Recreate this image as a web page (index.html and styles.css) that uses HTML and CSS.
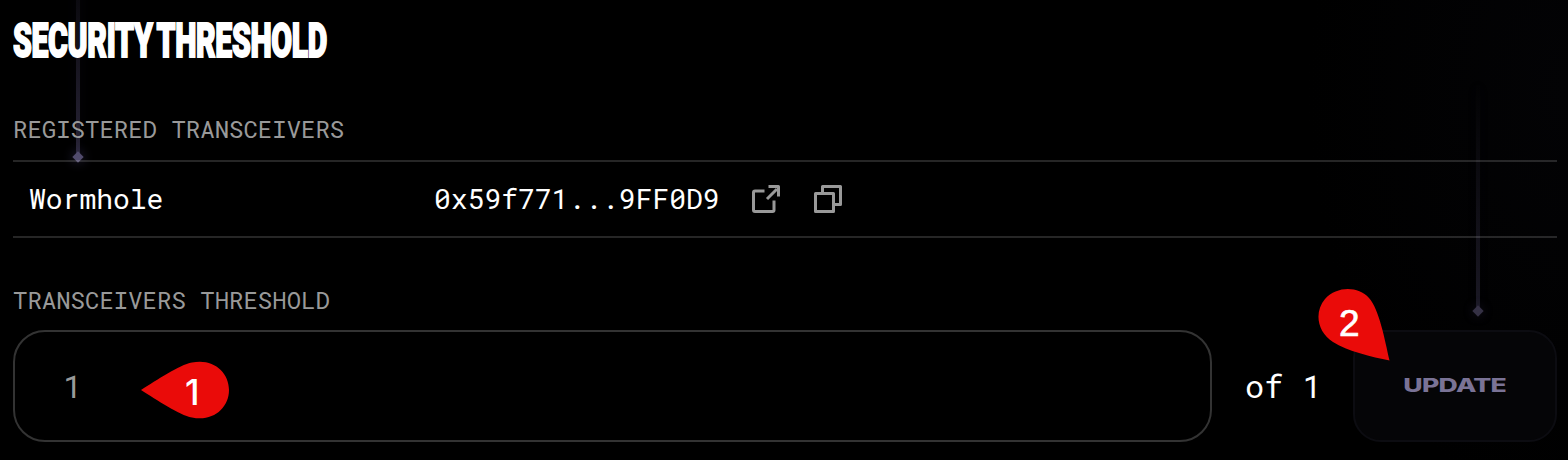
FILE: index.html
```html
<!DOCTYPE html>
<html lang="en">
<head>
<meta charset="utf-8">
<title>Security Threshold</title>
<link rel="stylesheet" href="styles.css">
</head>
<body>
<div class="backdrop">
  <div class="beam beam-left"></div>
  <div class="beam beam-right"></div>
</div>
<main class="panel">
  <h1 class="title"><span class="title-text">SECURITY THRESHOLD</span></h1>
  <h2 class="label label-registered">REGISTERED TRANSCEIVERS</h2>
  <div class="row">
    <span class="name">Wormhole</span>
    <span class="address">0x59f771...9FF0D9</span>
    <svg class="icon icon-open" viewBox="0 0 30 30"><path d="M13.500 7H4Q2.500 7 2.500 8.500V26Q2.500 27.500 4 27.500H21.500Q23 27.500 23 26V16.500"/><path d="M16 15L26 5M17.500 2.500H27.500V12.500"/></svg>
    <svg class="icon" viewBox="0 0 30 30"><path d="M2.500 9.500H20.500V27.500H2.500ZM9.500 9.500V2.500H27.500V20.500H20.500"/></svg>
  </div>
  <h2 class="label label-threshold">TRANSCEIVERS THRESHOLD</h2>
  <div class="form">
    <div class="field"><span class="value">1</span>
      <div class="marker marker-one"><svg class="drop" viewBox="0 0 90 60"><path d="M1 30C17 20 39 5 52 2.500C73 -2 89 12 89 30S73 62 52 57.500C39 55 17 40 1 30Z"/></svg><span class="digit">1</span></div>
    </div>
    <span class="total">of 1</span>
    <div class="button"><span class="button-text">UPDATE</span>
      <div class="marker marker-two"><svg class="drop" viewBox="0 0 72 72"><path d="M71.500 71.500C54 68 29 62 15 53C-1 43 -4 23 7 10C19 -3 40 -3 51 9C61 20 67 51 71.500 71.500Z"/></svg><span class="digit">2</span></div>
    </div>
  </div>
</main>
</body>
</html>
```
FILE: styles.css
```css
* { box-sizing: border-box; }
body {
  margin: 0;
  height: 460px;
  overflow: hidden;
  background: #000;
  color: #fff;
  font-family: "Roboto Mono", "DejaVu Sans Mono", monospace;
}
.backdrop {
  position: absolute;
  inset: 0;
  background: radial-gradient(ellipse 260px 420px at 100% 20%, #030305, transparent);
}
.beam {
  position: absolute;
  width: 4px;
  background: linear-gradient(transparent, #292538);
  box-shadow: 0 0 12px rgba(75, 65, 120, 0.12);
}
.beam::after {
  content: "";
  position: absolute;
  left: -2px;
  bottom: -4px;
  width: 8px;
  height: 8px;
  background: #514b6d;
  transform: rotate(45deg);
  box-shadow: 0 0 12px rgba(90, 80, 140, 0.6);
}
.beam-left { left: 76px; top: -60px; height: 217px; }
.beam-right { left: 1476px; top: 85px; height: 226px; background: linear-gradient(transparent, #1b1925); box-shadow: 0 0 12px rgba(75, 65, 120, 0.06); }
.beam-right::after { background: #353145; box-shadow: 0 0 12px rgba(90, 80, 140, 0.3); }
.panel {
  position: relative;
  padding: 14px 11px 0 13px;
  display: flex;
  flex-direction: column;
}
.title { margin: 0; height: 54px; font: 900 49px/54px Roboto, sans-serif; white-space: nowrap; }
.title-text { display: inline-block; letter-spacing: -0.5px; word-spacing: -4px; transform: scaleX(0.615); transform-origin: 0 0; -webkit-text-stroke: 2px #fff; }
.label { margin: 0; font-size: 24px; line-height: 32px; font-weight: 400; color: #999; }
.label-registered { margin-top: 45px; }
.row {
  margin-top: 15px;
  height: 78px;
  display: flex;
  align-items: center;
  border: solid rgba(255, 255, 255, 0.15);
  border-width: 2px 0;
  font-size: 28px;
  padding-left: 16px;
}
.name { width: 405px; padding-bottom: 2px; }
.address { width: 317px; padding-bottom: 2px; }
.icon { width: 30px; height: 30px; margin-right: 32px; fill: none; stroke: #999; stroke-width: 3; stroke-linejoin: round; }
.label-threshold { margin-top: 46px; }
.form { margin-top: 14px; display: flex; align-items: center; font-size: 32px; }
.field {
  position: relative;
  width: 1199px;
  height: 112px;
  border: 2px solid #333;
  border-radius: 32px;
  padding-left: 48px;
  line-height: 108px;
  color: #999;
}
.total { flex: none; width: 141px; padding: 0 0 2px 33px; }
.button {
  position: relative;
  width: 204px;
  height: 112px;
  border: 2px solid #0c0c11;
  border-radius: 28px;
  background: #050507;
  display: flex;
  align-items: center;
  justify-content: center;
}
.button-text { font: 800 18.5px/20px Inter, sans-serif; letter-spacing: -0.5px; color: #7a7396; transform: translateY(-1px) scaleX(1.44); }
.marker { position: absolute; color: #fff; }
.drop { display: block; width: 100%; height: 100%; fill: #ea0b09; }
.digit { position: absolute; }
.marker-one { left: 125px; top: 28px; width: 90px; height: 60px; }
.marker-one .digit { left: 45px; top: 12px; font: 500 35px/40px Inter, sans-serif; }
.marker-two { left: -37px; top: -43px; width: 72px; height: 72px; }
.marker-two .digit { left: 21px; top: 15px; font: 400 37px/40px "Liberation Sans", Arial, sans-serif; -webkit-text-stroke: 0.7px #fff; }
```
